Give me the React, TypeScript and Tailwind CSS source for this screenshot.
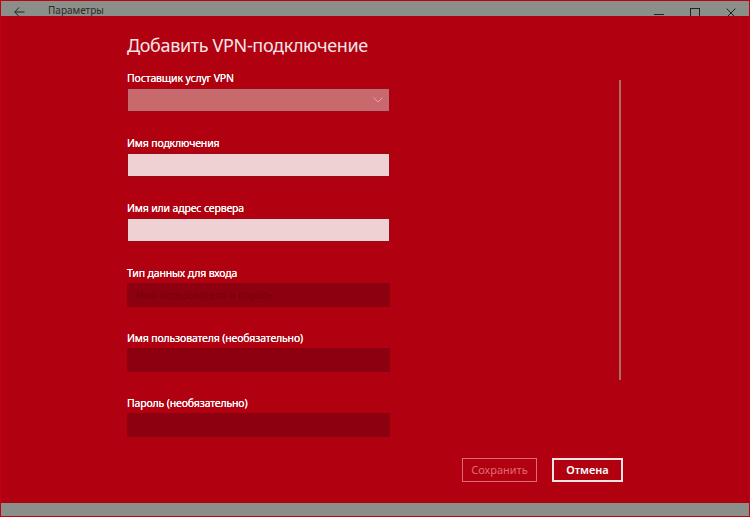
import React from "react";

const font = { fontFamily: '"Noto Sans", "Open Sans", sans-serif' };

function Field({ label, kind, placeholder }: { label: string; kind: "select" | "input" | "disabled"; placeholder?: string }) {
  return (
    <div className="flex flex-col">
      <div className="text-[10.5px] leading-[14px] tracking-[-0.15px] font-normal text-white h-[16px] [text-shadow:0_0_0.4px_#fff]">{label}</div>
      {kind === "select" && (
        <div className="mt-[1px] h-[24px] bg-[#c8696e] border border-[#9a0a18] flex items-center justify-end pr-[6px]">
          <svg width="10" height="6" viewBox="0 0 10 6" fill="none">
            <path d="M0.5 0.5 L5 5 L9.5 0.5" stroke="#e8a0a6" strokeWidth="1" />
          </svg>
        </div>
      )}
      {kind === "input" && <div className="mt-[1px] h-[24px] bg-[#efd0d3] border border-[#9a0a18]" />}
      {kind === "disabled" && (
        <div className="mt-[1px] h-[24px] bg-[#8d0010] flex items-center pl-[9px] text-[10px] text-[#76000e]">
          {placeholder}
        </div>
      )}
    </div>
  );
}

export default function App() {
  return (
    <div className="w-[750px] h-[517px] bg-[#8b8f8a] border border-[#c2000f] flex flex-col overflow-hidden" style={font}>
      <div className="h-[15px] overflow-hidden flex items-start pt-[4px] text-[#2b2b2b]">
        <div className="pl-[13px] w-[47px] pt-[2px]">
          <svg width="11" height="10" viewBox="0 0 11 10" fill="none">
            <path d="M5 0.5 L0.8 5 L5 9.5 M0.8 5 H10.5" stroke="#222" strokeWidth="1" />
          </svg>
        </div>
        <div className="text-[10px] leading-[11px]">Параметры</div>
        <div className="ml-auto flex items-start pt-[2px]">
          <div className="w-[36px] flex justify-center pt-[7px]"><div className="w-[10px] h-px bg-[#222]" /></div>
          <div className="w-[36px] flex justify-center pt-[1px]"><div className="w-[10px] h-[10px] border border-[#222]" /></div>
          <div className="w-[36px] flex justify-center pt-[1px]">
            <svg width="10" height="10" viewBox="0 0 10 10"><path d="M0.5 0.5 L9.5 9.5 M9.5 0.5 L0.5 9.5" stroke="#222" strokeWidth="1" /></svg>
          </div>
        </div>
      </div>
      <div className="h-[487px] bg-[#b1000f] px-[126px] pt-[16px] flex flex-col">
        <div className="text-[18px] leading-[26px] tracking-[-0.35px] text-[#f6e6e6]">Добавить VPN-подключение</div>
        <div className="flex mt-[13px]">
          <div className="w-[263px] flex flex-col gap-[24px]">
            <Field label="Поставщик услуг VPN" kind="select" />
            <Field label="Имя подключения" kind="input" />
            <Field label="Имя или адрес сервера" kind="input" />
            <Field label="Тип данных для входа" kind="disabled" placeholder="Имя пользователя и пароль" />
            <Field label="Имя пользователя (необязательно)" kind="disabled" />
            <Field label="Пароль (необязательно)" kind="disabled" />
          </div>
          <div className="ml-auto mr-[2px] mt-[9px] w-[2px] h-[300px] bg-[#a8705f]" />
        </div>
        <div className="flex justify-end gap-[15px] mt-[21px]">
          <div className="w-[75px] h-[24px] border border-[#e06a74] flex items-center justify-center text-[11px] text-[#e06a74]">Сохранить</div>
          <div className="w-[71px] h-[24px] border-2 border-[#f4e4e4] flex items-center justify-center text-[11px] font-semibold text-white">Отмена</div>
        </div>
      </div>
    </div>
  );
}
